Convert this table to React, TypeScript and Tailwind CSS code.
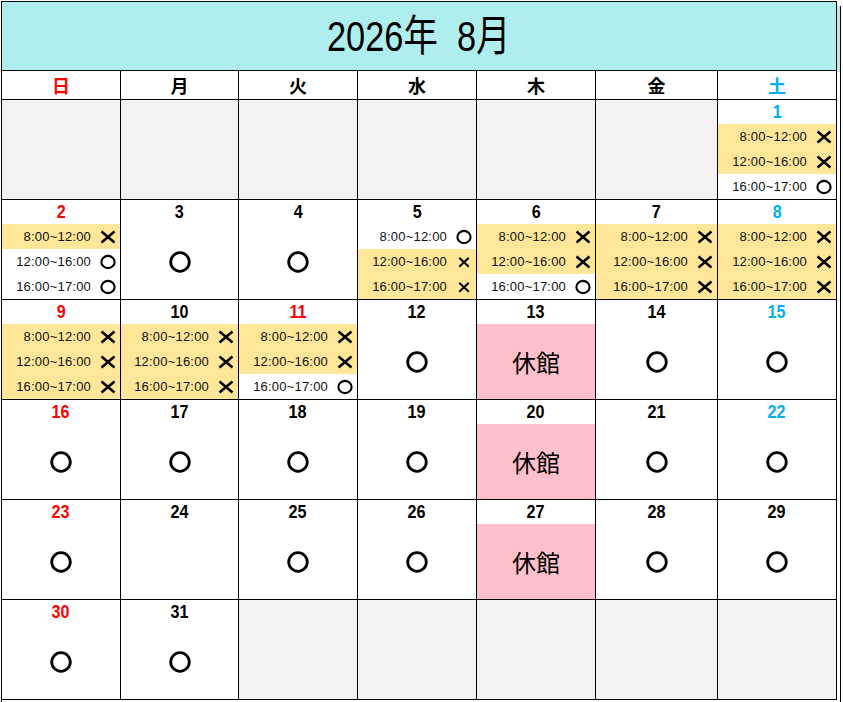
import React from "react";

type Mark = "x" | "o" | "xs";
type Col = "r" | "b" | undefined;
type Cell =
  | { kind: "blank" }
  | { kind: "slots"; d: number; c?: Col; slots: Mark[] }
  | { kind: "open"; d: number; c?: Col }
  | { kind: "closed"; d: number; c?: Col }
  | { kind: "none"; d: number; c?: Col };

const TIMES = ["8:00~12:00", "12:00~16:00", "16:00~17:00"];
const WEEK = ["日", "月", "火", "水", "木", "金", "土"];

const rows: Cell[][] = [
  [
    { kind: "blank" },
    { kind: "blank" },
    { kind: "blank" },
    { kind: "blank" },
    { kind: "blank" },
    { kind: "blank" },
    { kind: "slots", d: 1, c: "b", slots: ["x", "x", "o"] },
  ],
  [
    { kind: "slots", d: 2, c: "r", slots: ["x", "o", "o"] },
    { kind: "open", d: 3 },
    { kind: "open", d: 4 },
    { kind: "slots", d: 5, slots: ["o", "xs", "xs"] },
    { kind: "slots", d: 6, slots: ["x", "x", "o"] },
    { kind: "slots", d: 7, slots: ["x", "x", "x"] },
    { kind: "slots", d: 8, c: "b", slots: ["x", "x", "x"] },
  ],
  [
    { kind: "slots", d: 9, c: "r", slots: ["x", "x", "x"] },
    { kind: "slots", d: 10, slots: ["x", "x", "x"] },
    { kind: "slots", d: 11, c: "r", slots: ["x", "x", "o"] },
    { kind: "open", d: 12 },
    { kind: "closed", d: 13 },
    { kind: "open", d: 14 },
    { kind: "open", d: 15, c: "b" },
  ],
  [
    { kind: "open", d: 16, c: "r" },
    { kind: "open", d: 17 },
    { kind: "open", d: 18 },
    { kind: "open", d: 19 },
    { kind: "closed", d: 20 },
    { kind: "open", d: 21 },
    { kind: "open", d: 22, c: "b" },
  ],
  [
    { kind: "open", d: 23, c: "r" },
    { kind: "none", d: 24 },
    { kind: "open", d: 25 },
    { kind: "open", d: 26 },
    { kind: "closed", d: 27 },
    { kind: "open", d: 28 },
    { kind: "open", d: 29 },
  ],
  [
    { kind: "open", d: 30, c: "r" },
    { kind: "open", d: 31 },
    { kind: "blank" },
    { kind: "blank" },
    { kind: "blank" },
    { kind: "blank" },
    { kind: "blank" },
  ],
];

const GRID = "grid grid-cols-[119px_118px_119px_119px_119px_122px_119px]";

function MarkIcon({ m }: { m: Mark }) {
  if (m === "o") {
    return (
      <svg width="16" height="16" viewBox="0 0 16 16">
        <ellipse cx="8" cy="8" rx="6.6" ry="6.1" fill="none" stroke="#000" strokeWidth="2.1" />
      </svg>
    );
  }
  if (m === "xs") {
    return (
      <svg width="12" height="12" viewBox="0 0 12 12">
        <path d="M2 2.5 L10 10 M10 2.5 L2 10" stroke="#000" strokeWidth="2" strokeLinecap="square" />
      </svg>
    );
  }
  return (
    <svg width="16" height="14" viewBox="0 0 16 14">
      <path d="M1.5 1.5 L14.5 12.5 M14.5 1.5 L1.5 12.5" stroke="#000" strokeWidth="2.5" strokeLinecap="butt" />
    </svg>
  );
}

function BigCircle() {
  return (
    <svg width="24" height="24" viewBox="0 0 24 24">
      <circle cx="12" cy="12" r="9.3" fill="none" stroke="#000" strokeWidth="2.8" />
    </svg>
  );
}

function DateNum({ d, c }: { d: number; c?: Col }) {
  const color = c === "r" ? "text-[#ff0000]" : c === "b" ? "text-[#00b0f0]" : "text-black";
  return (
    <div className="h-[24px] flex items-center justify-center pb-[1px]">
      <span
        className={`inline-block scale-x-[0.85] text-[19px] font-bold leading-none ${color}`}
        style={{ fontFamily: '"Liberation Sans", Arial, sans-serif' }}
      >
        {d}
      </span>
    </div>
  );
}

function CellView({ cell }: { cell: Cell }) {
  const base = "border-r border-b border-black h-[100px] flex flex-col";
  if (cell.kind === "blank") {
    return <div className={`${base} bg-[#f2f2f2]`} />;
  }
  if (cell.kind === "slots") {
    return (
      <div className={`${base} bg-white`}>
        <DateNum d={cell.d} c={cell.c} />
        {cell.slots.map((m, i) => (
          <div
            key={i}
            className={`h-[25px] flex items-center justify-end pr-[1px] ${
              m === "o" ? "bg-white" : "bg-[#ffe699]"
            }`}
          >
            <span
              className="text-[13px] leading-none tracking-[0.2px] text-[#111]"
              style={{ fontFamily: '"Liberation Sans", Arial, sans-serif' }}
            >
              {TIMES[i]}
            </span>
            <span className="w-[22px] ml-[6px] flex items-center justify-center">
              <MarkIcon m={m} />
            </span>
          </div>
        ))}
      </div>
    );
  }
  if (cell.kind === "closed") {
    return (
      <div className={`${base} bg-white`}>
        <DateNum d={cell.d} c={cell.c} />
        <div className="flex-1 bg-[#ffc0cb] flex items-center justify-center">
          <span
            className="text-[24px] leading-none text-black"
            style={{ fontFamily: '"Noto Sans CJK JP", sans-serif' }}
          >
            休館
          </span>
        </div>
      </div>
    );
  }
  return (
    <div className={`${base} bg-white`}>
      <DateNum d={cell.d} c={cell.c} />
      <div className="flex-1 flex items-center justify-center">
        {cell.kind === "open" ? <BigCircle /> : null}
      </div>
    </div>
  );
}

export default function App() {
  return (
    <div className="w-[843px] h-[702px] bg-white flex pl-px pt-px overflow-hidden">
      <div className="w-[836px] border-l border-t border-black">
        <div className="h-[69px] bg-[#afeeee] border-r border-b border-black flex items-center justify-center">
          <span
            className="inline-block scale-x-[0.8] text-[43px] leading-none text-black whitespace-pre"
            style={{ fontFamily: '"Liberation Sans", "Noto Sans CJK JP", sans-serif' }}
          >
            2026年  8月
          </span>
        </div>
        <div className={GRID}>
          {WEEK.map((w, i) => (
            <div
              key={w}
              className={`h-[29px] border-r border-b border-black flex items-center justify-center text-[18px] font-bold leading-none ${
                i === 0 ? "text-[#ff0000]" : i === 6 ? "text-[#00b0f0]" : "text-black"
              }`}
              style={{ fontFamily: '"Noto Sans CJK JP", sans-serif' }}
            >
              {w}
            </div>
          ))}
        </div>
        {rows.map((r, ri) => (
          <div key={ri} className={GRID}>
            {r.map((c, ci) => (
              <CellView key={ci} cell={c} />
            ))}
          </div>
        ))}
      </div>
      <div className="w-[4px] mt-[5px] border-r border-black flex flex-col">
        <div className="h-[66px] bg-[#afeeee]" />
      </div>
    </div>
  );
}
